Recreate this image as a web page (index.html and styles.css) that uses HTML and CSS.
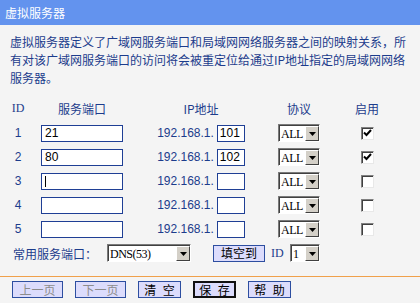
FILE: index.html
```html
<!DOCTYPE html>
<html lang="zh-CN">
<head>
<meta charset="UTF-8">
<title>虚拟服务器</title>
<link rel="stylesheet" href="styles.css">
</head>
<body>

<div class="title-bar">虚拟服务器</div>

<p class="intro">虚拟服务器定义了广域网服务端口和局域网网络服务器之间的映射关系，所有对该广域网服务端口的访问将会被重定位给通过IP地址指定的局域网网络服务器。</p>

<form class="vs-form" onsubmit="return false">
  <div class="vs-table">
    <span class="hd latin">ID</span>
    <span class="hd">服务端口</span>
    <span class="hd">IP地址</span>
    <span class="hd">协议</span>
    <span class="hd">启用</span>

    <span class="row-id">1</span>
    <input class="field port" type="text" value="21">
    <span class="ip"><span class="ip-prefix">192.168.1.</span><input class="field host" type="text" value="101"></span>
    <span class="combo combo-proto"><select><option>ALL</option><option>TCP</option><option>UDP</option></select><span class="combo-btn"><svg width="7" height="4" viewBox="0 0 7 4"><polygon points="0,0 7,0 3.5,4" fill="#000"/></svg></span></span>
    <span class="check"><svg width="9" height="8" viewBox="0 0 9 8"><polyline points="1,3.5 3.5,6 8,1" fill="none" stroke="#000" stroke-width="2"/></svg></span>

    <span class="row-id">2</span>
    <input class="field port" type="text" value="80">
    <span class="ip"><span class="ip-prefix">192.168.1.</span><input class="field host" type="text" value="102"></span>
    <span class="combo combo-proto"><select><option>ALL</option><option>TCP</option><option>UDP</option></select><span class="combo-btn"><svg width="7" height="4" viewBox="0 0 7 4"><polygon points="0,0 7,0 3.5,4" fill="#000"/></svg></span></span>
    <span class="check"><svg width="9" height="8" viewBox="0 0 9 8"><polyline points="1,3.5 3.5,6 8,1" fill="none" stroke="#000" stroke-width="2"/></svg></span>

    <span class="row-id">3</span>
    <span class="field-wrap"><input class="field port" type="text" value=""><span class="caret"></span></span>
    <span class="ip"><span class="ip-prefix">192.168.1.</span><input class="field host" type="text" value=""></span>
    <span class="combo combo-proto"><select><option>ALL</option><option>TCP</option><option>UDP</option></select><span class="combo-btn"><svg width="7" height="4" viewBox="0 0 7 4"><polygon points="0,0 7,0 3.5,4" fill="#000"/></svg></span></span>
    <span class="check"></span>

    <span class="row-id">4</span>
    <input class="field port" type="text" value="">
    <span class="ip"><span class="ip-prefix">192.168.1.</span><input class="field host" type="text" value=""></span>
    <span class="combo combo-proto"><select><option>ALL</option><option>TCP</option><option>UDP</option></select><span class="combo-btn"><svg width="7" height="4" viewBox="0 0 7 4"><polygon points="0,0 7,0 3.5,4" fill="#000"/></svg></span></span>
    <span class="check"></span>

    <span class="row-id">5</span>
    <input class="field port" type="text" value="">
    <span class="ip"><span class="ip-prefix">192.168.1.</span><input class="field host" type="text" value=""></span>
    <span class="combo combo-proto"><select><option>ALL</option><option>TCP</option><option>UDP</option></select><span class="combo-btn"><svg width="7" height="4" viewBox="0 0 7 4"><polygon points="0,0 7,0 3.5,4" fill="#000"/></svg></span></span>
    <span class="check"></span>
  </div>

  <div class="quick">
    <span class="quick-label">常用服务端口：</span>
    <span class="combo combo-wide"><select><option>DNS(53)</option><option>FTP(21)</option><option>HTTP(80)</option></select><span class="combo-btn"><svg width="7" height="4" viewBox="0 0 7 4"><polygon points="0,0 7,0 3.5,4" fill="#000"/></svg></span></span>
    <button class="btn btn-fill" type="button">填空到</button>
    <span class="quick-id latin">ID</span>
    <span class="combo combo-id"><select><option>1</option><option>2</option><option>3</option><option>4</option><option>5</option></select><span class="combo-btn"><svg width="7" height="4" viewBox="0 0 7 4"><polygon points="0,0 7,0 3.5,4" fill="#000"/></svg></span></span>
  </div>

  <div class="rule"></div>

  <div class="actions">
    <button class="btn btn-page" type="button" disabled>上一页</button>
    <button class="btn btn-page" type="button" disabled>下一页</button>
    <button class="btn btn-small" type="button">清 空</button>
    <button class="btn btn-small btn-save" type="submit">保 存</button>
    <button class="btn btn-small" type="button">帮 助</button>
  </div>
</form>

</body>
</html>
```

FILE: styles.css
```css
* {
  box-sizing: border-box;
}
html, body {
  margin: 0;
}
body {
  width: 420px;
  height: 303px;
  overflow: hidden;
  background: #f4f4f4;
  font: 12px "Noto Sans CJK SC", sans-serif;
  color: #1c3c8c;
}
.latin {
  font-family: "Liberation Serif", "Noto Sans CJK SC", serif;
}

/* header bar */
.title-bar {
  height: 25px;
  line-height: 25px;
  padding-left: 5px;
  background: #6393ee;
  color: #fff;
}
.intro {
  margin: 8px 0 0;
  padding: 0 10px;
  line-height: 18px;
}

/* rules table */
.vs-table {
  display: grid;
  grid-template-columns: 28px 100px 138px 58px 78px;
  grid-template-rows: 25px;
  grid-auto-rows: 24px;
  align-items: center;
  justify-items: center;
  margin: 9px 0 0 4px;
}
.row-id {
  font-family: "Liberation Sans", Arial, sans-serif;
}
.field {
  height: 17px;
  border: 1px solid #1f3f95;
  background: #fff;
  padding: 0 3px;
  margin: 0;
  font: 12px "Liberation Sans", Arial, sans-serif;
  color: #000;
  outline: none;
}
.port {
  width: 82px;
}
.host {
  width: 28px;
  padding: 0 2px;
  margin-left: 3px;
}
.field-wrap {
  position: relative;
  display: inline-flex;
}
.caret {
  position: absolute;
  left: 4px;
  top: 3px;
  width: 1px;
  height: 11px;
  background: #000;
}
.ip {
  display: flex;
  align-items: center;
}
.ip-prefix {
  font-family: "Liberation Sans", Arial, sans-serif;
}

/* classic combo box */
.combo {
  display: inline-flex;
  height: 18px;
  border: 1px solid;
  border-color: #7a7a7a #fff #fff #7a7a7a;
  padding: 1px 0 0 1px;
  background: #404040;
}
.combo select {
  appearance: none;
  -webkit-appearance: none;
  flex: 1;
  min-width: 0;
  height: 100%;
  border: none;
  border-radius: 0;
  padding: 0 0 0 1px;
  margin: 0;
  background: #fff;
  font: 12px "Liberation Serif", serif;
  letter-spacing: -0.5px;
  color: #000;
  outline: none;
}
.combo-btn {
  display: flex;
  align-items: center;
  justify-content: center;
  width: 14px;
  height: 100%;
  background: #d4d0c8;
  border: 1px solid;
  border-color: #fff #404040 #404040 #fff;
}
.combo-proto {
  width: 42px;
}
.combo-wide {
  width: 84px;
}
.combo-id {
  width: 30px;
}

.check {
  display: flex;
  align-items: center;
  justify-content: center;
  width: 13px;
  height: 13px;
  background: #fff;
  border: 1px solid;
  border-color: #808080 #e8e8e8 #e8e8e8 #808080;
  box-shadow: inset 1px 1px #404040;
}

/* quick fill row */
.quick {
  display: flex;
  align-items: center;
  height: 24px;
  padding-left: 13px;
}
.quick-label {
  width: 94px;
}
.btn {
  height: 17px;
  padding: 0;
  border: 1px solid #2d4ea0;
  border-radius: 0;
  background: #dcdcfc;
  font: 12px "Noto Sans CJK SC", sans-serif;
  line-height: 14px;
  color: #000;
}
.btn:disabled {
  color: #8c8c8c;
}
.btn-fill {
  width: 52px;
  margin-left: 22px;
}
.quick-id {
  width: 19px;
  margin-left: 6px;
}

.rule {
  height: 1px;
  margin-top: 11px;
  background: #f0a04b;
}

/* bottom buttons */
.actions {
  display: flex;
  gap: 12px;
  margin-top: 4px;
  padding-left: 12px;
}
.btn-page {
  width: 51px;
}
.btn-small {
  width: 43px;
  word-spacing: 4px;
}
.btn-save {
  border: 2px solid #111;
}
```
